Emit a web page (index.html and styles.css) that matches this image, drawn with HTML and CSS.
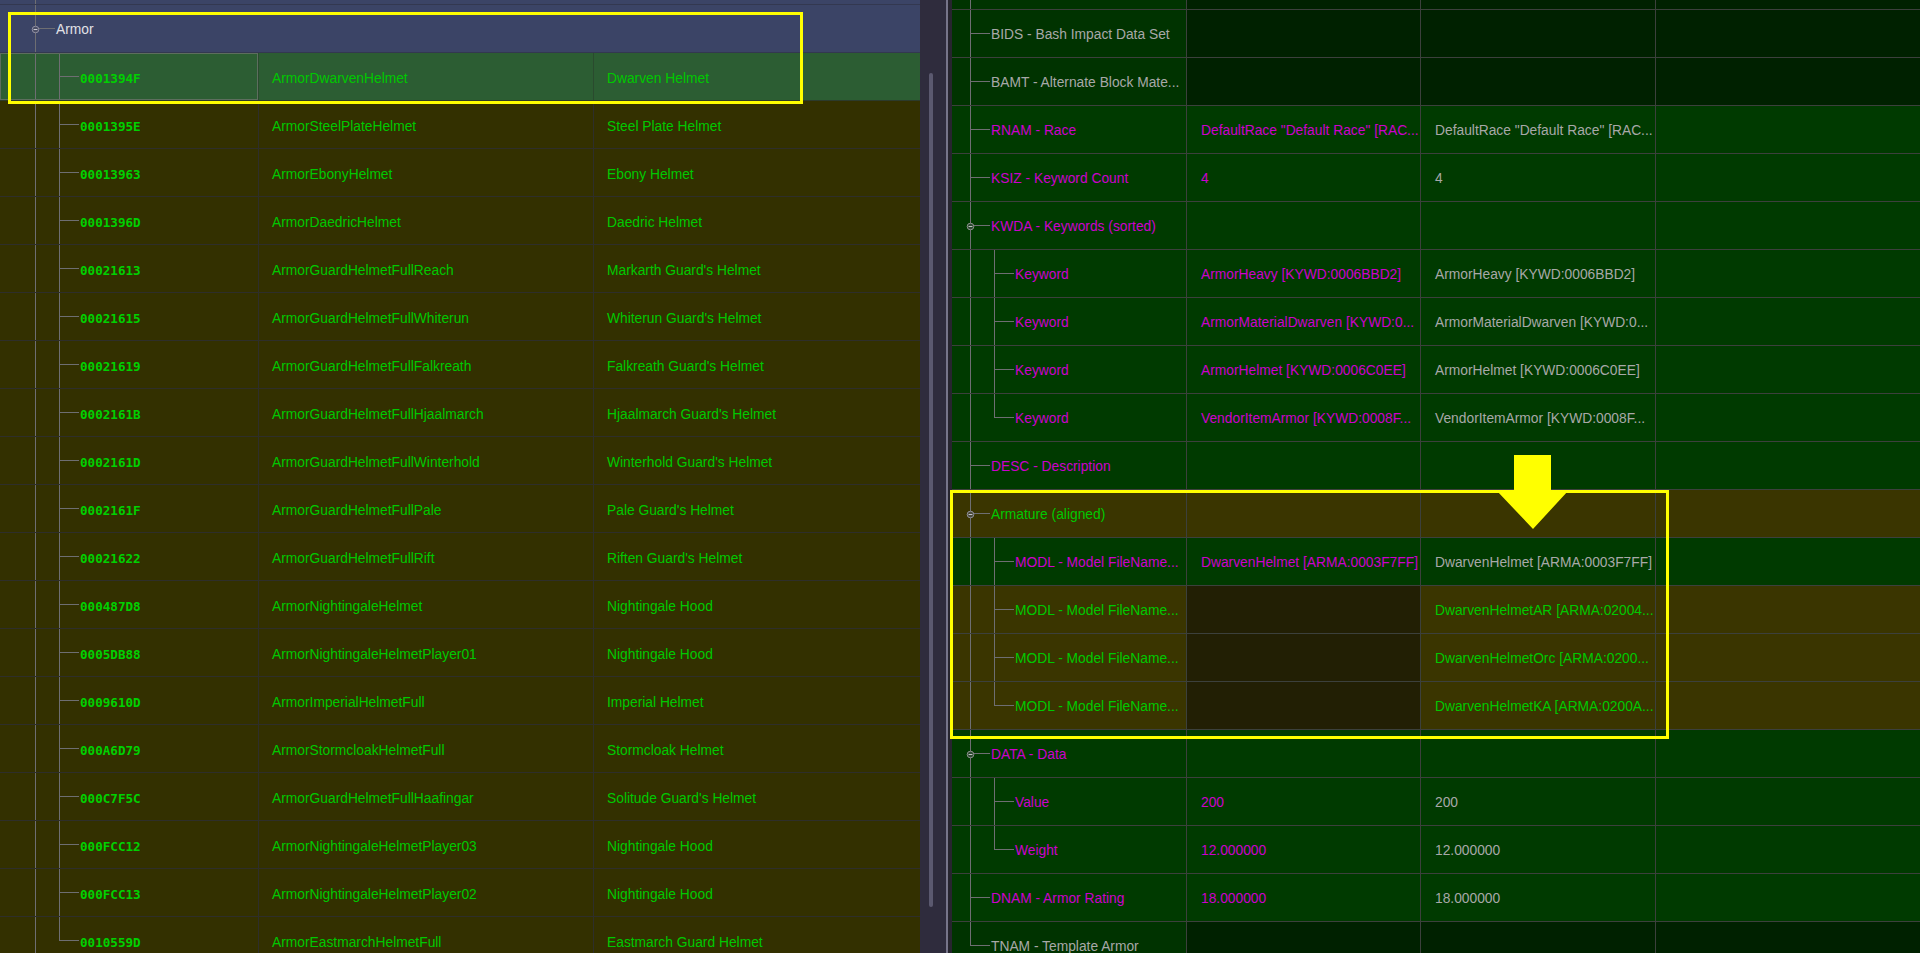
FILE: index.html
```
<!DOCTYPE html>
<html>
<head>
<meta charset="utf-8">
<link rel="stylesheet" href="styles.css">
</head>
<body>
<div class="app">
  <div class="left-pane">
    <div class="lrow slate top"><div class="lc lt-top"></div></div>
    <div class="lrow slate root">
      <div class="lc lt-root">
        <svg class="exp" width="9" height="9" viewBox="0 0 9 9"><circle cx="4.5" cy="4.5" r="3.3" fill="#4b4f66" stroke="#8e8ea2" stroke-width="1"/><line x1="2.6" y1="4.5" x2="6.4" y2="4.5" stroke="#c8c8d4" stroke-width="1"/></svg>
        <span class="root-label">Armor</span>
      </div>
    </div>
    <div class="lrow sel"><div class="lc lt-child mono focus">0001394F</div><div class="lc">ArmorDwarvenHelmet</div><div class="lc">Dwarven Helmet</div></div>
    <div class="lrow"><div class="lc lt-child mono">0001395E</div><div class="lc">ArmorSteelPlateHelmet</div><div class="lc">Steel Plate Helmet</div></div>
    <div class="lrow"><div class="lc lt-child mono">00013963</div><div class="lc">ArmorEbonyHelmet</div><div class="lc">Ebony Helmet</div></div>
    <div class="lrow"><div class="lc lt-child mono">0001396D</div><div class="lc">ArmorDaedricHelmet</div><div class="lc">Daedric Helmet</div></div>
    <div class="lrow"><div class="lc lt-child mono">00021613</div><div class="lc">ArmorGuardHelmetFullReach</div><div class="lc">Markarth Guard's Helmet</div></div>
    <div class="lrow"><div class="lc lt-child mono">00021615</div><div class="lc">ArmorGuardHelmetFullWhiterun</div><div class="lc">Whiterun Guard's Helmet</div></div>
    <div class="lrow"><div class="lc lt-child mono">00021619</div><div class="lc">ArmorGuardHelmetFullFalkreath</div><div class="lc">Falkreath Guard's Helmet</div></div>
    <div class="lrow"><div class="lc lt-child mono">0002161B</div><div class="lc">ArmorGuardHelmetFullHjaalmarch</div><div class="lc">Hjaalmarch Guard's Helmet</div></div>
    <div class="lrow"><div class="lc lt-child mono">0002161D</div><div class="lc">ArmorGuardHelmetFullWinterhold</div><div class="lc">Winterhold Guard's Helmet</div></div>
    <div class="lrow"><div class="lc lt-child mono">0002161F</div><div class="lc">ArmorGuardHelmetFullPale</div><div class="lc">Pale Guard's Helmet</div></div>
    <div class="lrow"><div class="lc lt-child mono">00021622</div><div class="lc">ArmorGuardHelmetFullRift</div><div class="lc">Riften Guard's Helmet</div></div>
    <div class="lrow"><div class="lc lt-child mono">000487D8</div><div class="lc">ArmorNightingaleHelmet</div><div class="lc">Nightingale Hood</div></div>
    <div class="lrow"><div class="lc lt-child mono">0005DB88</div><div class="lc">ArmorNightingaleHelmetPlayer01</div><div class="lc">Nightingale Hood</div></div>
    <div class="lrow"><div class="lc lt-child mono">0009610D</div><div class="lc">ArmorImperialHelmetFull</div><div class="lc">Imperial Helmet</div></div>
    <div class="lrow"><div class="lc lt-child mono">000A6D79</div><div class="lc">ArmorStormcloakHelmetFull</div><div class="lc">Stormcloak Helmet</div></div>
    <div class="lrow"><div class="lc lt-child mono">000C7F5C</div><div class="lc">ArmorGuardHelmetFullHaafingar</div><div class="lc">Solitude Guard's Helmet</div></div>
    <div class="lrow"><div class="lc lt-child mono">000FCC12</div><div class="lc">ArmorNightingaleHelmetPlayer03</div><div class="lc">Nightingale Hood</div></div>
    <div class="lrow"><div class="lc lt-child mono">000FCC13</div><div class="lc">ArmorNightingaleHelmetPlayer02</div><div class="lc">Nightingale Hood</div></div>
    <div class="lrow"><div class="lc lt-child-last mono">0010559D</div><div class="lc">ArmorEastmarchHelmetFull</div><div class="lc">Eastmarch Guard Helmet</div></div>
  </div>

  <div class="vscroll"><div class="thumb"></div></div>
  <div class="splitter"><div class="split-line"></div></div>

  <div class="right-pane">
    <div class="rrow dim top"><div class="rc rt-top"></div><div class="rc"></div><div class="rc"></div><div class="rc"></div></div>
    <div class="rrow dim"><div class="rc rt-item gray">BIDS - Bash Impact Data Set</div><div class="rc"></div><div class="rc"></div><div class="rc"></div></div>
    <div class="rrow dim"><div class="rc rt-item gray">BAMT - Alternate Block Mate...</div><div class="rc"></div><div class="rc"></div><div class="rc"></div></div>
    <div class="rrow"><div class="rc rt-item mag">RNAM - Race</div><div class="rc mag">DefaultRace "Default Race" [RAC...</div><div class="rc gray">DefaultRace "Default Race" [RAC...</div><div class="rc"></div></div>
    <div class="rrow"><div class="rc rt-item mag">KSIZ - Keyword Count</div><div class="rc mag">4</div><div class="rc gray">4</div><div class="rc"></div></div>
    <div class="rrow"><div class="rc rt-group mag"><svg class="exp" width="9" height="9" viewBox="0 0 9 9"><circle cx="4.5" cy="4.5" r="3.3" fill="#2c4a30" stroke="#8a8f8a" stroke-width="1"/><line x1="2.6" y1="4.5" x2="6.4" y2="4.5" stroke="#c0c4c0" stroke-width="1"/></svg><span class="grp-label">KWDA - Keywords (sorted)</span></div><div class="rc"></div><div class="rc"></div><div class="rc"></div></div>
    <div class="rrow"><div class="rc rt-child mag">Keyword</div><div class="rc mag">ArmorHeavy [KYWD:0006BBD2]</div><div class="rc gray">ArmorHeavy [KYWD:0006BBD2]</div><div class="rc"></div></div>
    <div class="rrow"><div class="rc rt-child mag">Keyword</div><div class="rc mag">ArmorMaterialDwarven [KYWD:0...</div><div class="rc gray">ArmorMaterialDwarven [KYWD:0...</div><div class="rc"></div></div>
    <div class="rrow"><div class="rc rt-child mag">Keyword</div><div class="rc mag">ArmorHelmet [KYWD:0006C0EE]</div><div class="rc gray">ArmorHelmet [KYWD:0006C0EE]</div><div class="rc"></div></div>
    <div class="rrow"><div class="rc rt-child-last mag">Keyword</div><div class="rc mag">VendorItemArmor [KYWD:0008F...</div><div class="rc gray">VendorItemArmor [KYWD:0008F...</div><div class="rc"></div></div>
    <div class="rrow"><div class="rc rt-item mag">DESC - Description</div><div class="rc"></div><div class="rc"></div><div class="rc"></div></div>
    <div class="rrow olive"><div class="rc rt-group grn"><svg class="exp" width="9" height="9" viewBox="0 0 9 9"><circle cx="4.5" cy="4.5" r="3.3" fill="#4a4a3a" stroke="#8e8e96" stroke-width="1"/><line x1="2.6" y1="4.5" x2="6.4" y2="4.5" stroke="#c4c4c8" stroke-width="1"/></svg><span class="grp-label">Armature (aligned)</span></div><div class="rc"></div><div class="rc"></div><div class="rc"></div></div>
    <div class="rrow"><div class="rc rt-child mag">MODL - Model FileName...</div><div class="rc mag">DwarvenHelmet [ARMA:0003F7FF]</div><div class="rc gray">DwarvenHelmet [ARMA:0003F7FF]</div><div class="rc"></div></div>
    <div class="rrow olive"><div class="rc rt-child grn">MODL - Model FileName...</div><div class="rc void"></div><div class="rc grn">DwarvenHelmetAR [ARMA:02004...</div><div class="rc"></div></div>
    <div class="rrow olive"><div class="rc rt-child grn">MODL - Model FileName...</div><div class="rc void"></div><div class="rc grn">DwarvenHelmetOrc [ARMA:0200...</div><div class="rc"></div></div>
    <div class="rrow olive"><div class="rc rt-child-last grn">MODL - Model FileName...</div><div class="rc void"></div><div class="rc grn">DwarvenHelmetKA [ARMA:0200A...</div><div class="rc"></div></div>
    <div class="rrow"><div class="rc rt-group mag"><svg class="exp" width="9" height="9" viewBox="0 0 9 9"><circle cx="4.5" cy="4.5" r="3.3" fill="#2c4a30" stroke="#8a8f8a" stroke-width="1"/><line x1="2.6" y1="4.5" x2="6.4" y2="4.5" stroke="#c0c4c0" stroke-width="1"/></svg><span class="grp-label">DATA - Data</span></div><div class="rc"></div><div class="rc"></div><div class="rc"></div></div>
    <div class="rrow"><div class="rc rt-child mag">Value</div><div class="rc mag">200</div><div class="rc gray">200</div><div class="rc"></div></div>
    <div class="rrow"><div class="rc rt-child-last mag">Weight</div><div class="rc mag">12.000000</div><div class="rc gray">12.000000</div><div class="rc"></div></div>
    <div class="rrow"><div class="rc rt-item mag">DNAM - Armor Rating</div><div class="rc mag">18.000000</div><div class="rc gray">18.000000</div><div class="rc"></div></div>
    <div class="rrow dim"><div class="rc rt-last gray">TNAM - Template Armor</div><div class="rc"></div><div class="rc"></div><div class="rc"></div></div>
  </div>
</div>

<div class="annot box-left"></div>
<div class="annot box-right"></div>
<svg class="annot arrow" width="71" height="74" viewBox="0 0 71 74"><polygon points="17,0 54,0 54,36 71,36 36,74 0,36 17,36" fill="#ffff00"/></svg>
</body>
</html>
```
FILE: styles.css
```
:root {
  --tl: #6e6e72;
  --grid-l: #2e2e2a;
  --grid-r: #3c403c;
}
html, body {
  margin: 0;
  padding: 0;
  width: 1920px;
  height: 953px;
  overflow: hidden;
  background: #2e2b3c;
  font-family: "Liberation Sans", Arial, sans-serif;
  font-size: 13.8px;
}
body { position: relative; }
.app {
  display: flex;
  height: 953px;
  overflow: hidden;
}

/* ---------- left pane ---------- */
.left-pane {
  width: 920px;
  flex: none;
  background: #333000;
  overflow: hidden;
}
.lrow {
  display: grid;
  grid-template-columns: 259px 335px 326px;
  height: 48px;
  box-sizing: border-box;
  border-bottom: 1px solid var(--grid-l);
  background: #333000;
  color: #00c800;
}
.lrow.slate { background: #3b4466; grid-template-columns: 920px; border-bottom-color: #333850; }
.lrow.top { height: 5px; }
.lrow.sel { background: #2c5d33; border-bottom-color: #2c3a2c; }
.lc {
  display: flex;
  align-items: center;
  padding-left: 13px;
  padding-top: 3px;
  box-sizing: border-box;
  border-right: 1px solid var(--grid-l);
  overflow: hidden;
  white-space: nowrap;
  min-width: 0;
}
.lrow.top .lc { padding-top: 0; }
.lrow.sel .lc { border-right-color: #2a4a2e; }
.lc:last-child { border-right: none; }
.lrow.slate .lc { border-right: none; }
.mono {
  font-family: "DejaVu Sans Mono", "Liberation Mono", monospace;
  font-size: 12.6px;
  font-weight: bold;
  color: #00d000;
}
.focus { box-shadow: inset 0 0 0 1px #5d6e5e; }

.lt-top {
  background: linear-gradient(var(--tl), var(--tl)) 35px 0 / 1px 100% no-repeat;
}
.lt-root {
  padding-left: 31px;
  padding-top: 2px;
  background:
    linear-gradient(var(--tl), var(--tl)) 35px 0 / 1px 100% no-repeat,
    linear-gradient(var(--tl), var(--tl)) 39px 50% / 16px 1px no-repeat;
}
.root-label { margin-left: 16px; color: #e2e2e6; }
.lt-child, .lt-child-last { padding-left: 80px; }
.lt-child {
  background:
    linear-gradient(var(--tl), var(--tl)) 35px 0 / 1px 100% no-repeat,
    linear-gradient(var(--tl), var(--tl)) 59px 0 / 1px 100% no-repeat,
    linear-gradient(var(--tl), var(--tl)) 59px 50% / 20px 1px no-repeat;
}
.lt-child-last {
  background:
    linear-gradient(var(--tl), var(--tl)) 35px 0 / 1px 100% no-repeat,
    linear-gradient(var(--tl), var(--tl)) 59px 0 / 1px 50% no-repeat,
    linear-gradient(var(--tl), var(--tl)) 59px 50% / 20px 1px no-repeat;
}
.exp { flex: none; display: block; position: relative; z-index: 1; }

/* ---------- scrollbar + splitter ---------- */
.vscroll {
  width: 26px;
  flex: none;
  background: #2f2c3d;
  padding-top: 73px;
  box-sizing: border-box;
}
.thumb {
  margin-left: 9px;
  width: 4px;
  height: 834px;
  border-radius: 2px;
  background: #5b596f;
}
.splitter {
  width: 6px;
  flex: none;
  background: #27252f;
  display: flex;
}
.split-line { width: 2px; background: #77758a; }

/* ---------- right pane ---------- */
.right-pane {
  flex: 1;
  min-width: 0;
  overflow: hidden;
  background: #003a00;
}
.rrow {
  display: grid;
  grid-template-columns: 235px 234px 235px 1fr;
  height: 48px;
  box-sizing: border-box;
  border-bottom: 1px solid var(--grid-r);
  background: #003a00;
}
.rrow.top { height: 10px; }
.rrow.dim { background: #002100; }
.rrow.dim .rc:first-child { background-color: #003300; }
.rrow.olive { background: #3a3500; }
.rc.void { background-color: #221f04; }
.rc {
  display: flex;
  align-items: center;
  padding-left: 14px;
  padding-top: 2px;
  box-sizing: border-box;
  border-right: 1px solid var(--grid-r);
  overflow: hidden;
  white-space: nowrap;
  min-width: 0;
}
.rrow.top .rc { padding-top: 0; }
.rc:last-child { border-right: none; }

.mag { color: #cc00cc; }
.gray { color: #a8a8a8; }
.grn { color: #00c800; }

.rt-top {
  background-image: linear-gradient(var(--tl), var(--tl));
  background-position: 18px 0;
  background-size: 1px 100%;
  background-repeat: no-repeat;
}
.rt-item {
  padding-left: 39px;
  background-image: linear-gradient(var(--tl), var(--tl)), linear-gradient(var(--tl), var(--tl));
  background-position: 18px 0, 18px 50%;
  background-size: 1px 100%, 20px 1px;
  background-repeat: no-repeat;
}
.rt-last {
  padding-left: 39px;
  background-image: linear-gradient(var(--tl), var(--tl)), linear-gradient(var(--tl), var(--tl));
  background-position: 18px 0, 18px 50%;
  background-size: 1px 50%, 20px 1px;
  background-repeat: no-repeat;
}
.rt-group {
  padding-left: 14px;
  background-image: linear-gradient(var(--tl), var(--tl)), linear-gradient(var(--tl), var(--tl));
  background-position: 18px 0, 22px 50%;
  background-size: 1px 100%, 16px 1px;
  background-repeat: no-repeat;
}
.grp-label { margin-left: 16px; }
.rt-child, .rt-child-last { padding-left: 63px; }
.rt-child {
  background-image: linear-gradient(var(--tl), var(--tl)), linear-gradient(var(--tl), var(--tl)), linear-gradient(var(--tl), var(--tl));
  background-position: 18px 0, 42px 0, 42px 50%;
  background-size: 1px 100%, 1px 100%, 20px 1px;
  background-repeat: no-repeat;
}
.rt-child-last {
  background-image: linear-gradient(var(--tl), var(--tl)), linear-gradient(var(--tl), var(--tl)), linear-gradient(var(--tl), var(--tl));
  background-position: 18px 0, 42px 0, 42px 50%;
  background-size: 1px 100%, 1px 50%, 20px 1px;
  background-repeat: no-repeat;
}

/* ---------- annotation overlays ---------- */
.annot { position: absolute; box-sizing: border-box; pointer-events: none; }
.box-left {
  left: 8px; top: 12px; width: 795px; height: 92px;
  border: 3px solid #ffff00;
}
.box-right {
  left: 950px; top: 490px; width: 719px; height: 249px;
  border: 3px solid #ffff00;
}
.arrow { left: 1497px; top: 455px; display: block; }
```
